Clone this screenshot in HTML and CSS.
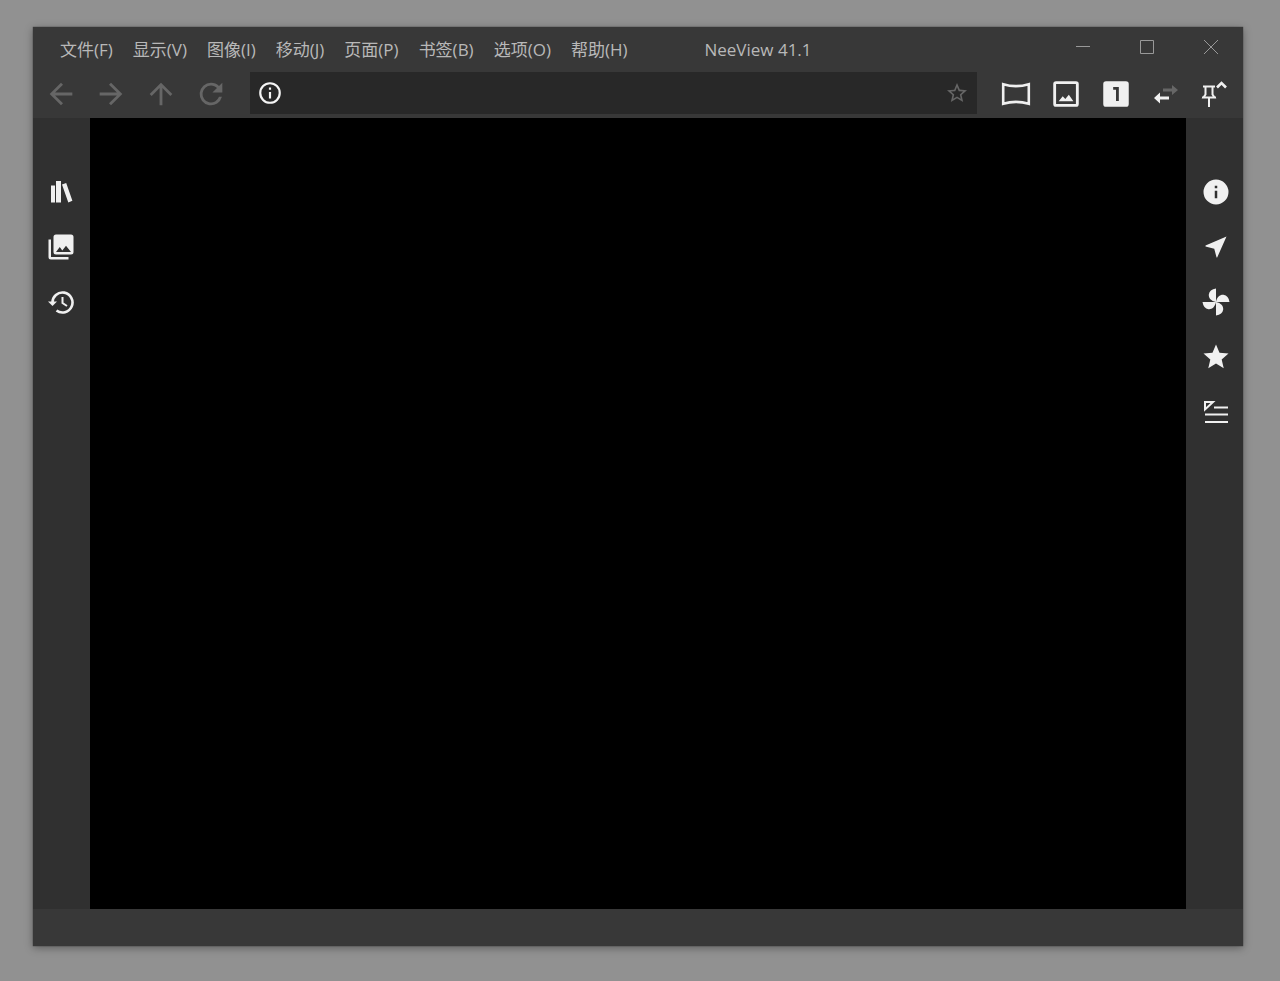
FILE: index.html
```html
<!DOCTYPE html>
<html lang="zh-CN">
<head>
<meta charset="utf-8">
<title>NeeView 41.1</title>
<link rel="stylesheet" href="styles.css">
</head>
<body>
<div class="window">
  <header class="titlebar">
    <nav class="menu" aria-label="菜单">
      <button>文件(F)</button>
      <button>显示(V)</button>
      <button>图像(I)</button>
      <button>移动(J)</button>
      <button>页面(P)</button>
      <button>书签(B)</button>
      <button>选项(O)</button>
      <button>帮助(H)</button>
    </nav>
    <h1 class="title">NeeView 41.1</h1>
    <div class="caption">
      <button aria-label="最小化"><svg width="16" height="16" viewBox="0 0 16 16"><path d="M1 7.500h14"/></svg></button>
      <button aria-label="最大化"><svg width="16" height="16" viewBox="0 0 16 16"><path d="M1.500 1.500h13v13h-13z"/></svg></button>
      <button aria-label="关闭"><svg width="16" height="16" viewBox="0 0 16 16"><path d="M1 1l14 14M15 1L1 15"/></svg></button>
    </div>
  </header>

  <div class="toolbar">
    <div class="tools dim">
      <button aria-label="后退"><svg width="34" height="34" viewBox="0 0 24 24"><path d="M20 11H7.830l5.590-5.590L12 4l-8 8 8 8 1.410-1.410L7.830 13H20z"/></svg></button>
      <button aria-label="前进"><svg width="34" height="34" viewBox="0 0 24 24"><path d="M12 4l-1.410 1.410L16.170 11H4v2h12.170l-5.580 5.590L12 20l8-8z"/></svg></button>
      <button aria-label="上级"><svg width="34" height="34" viewBox="0 0 24 24"><path d="M4 12l1.410 1.410L11 7.830V20h2V7.830l5.580 5.590L20 12l-8-8z"/></svg></button>
      <button aria-label="刷新"><svg width="34" height="34" viewBox="0 0 24 24"><path d="M17.650 6.350A7.960 7.960 0 0 0 12 4a8 8 0 1 0 7.730 10h-2.080A6 6 0 1 1 12 6c1.660 0 3.140.69 4.220 1.780L13 11h7V4z"/></svg></button>
    </div>
    <div class="address">
      <button aria-label="书籍信息"><svg width="26" height="26" viewBox="0 0 24 24"><path d="M11 7h2v2h-2zm0 4h2v6h-2zm1-9a10 10 0 1 0 0 20 10 10 0 0 0 0-20zm0 18a8 8 0 1 1 0-16 8 8 0 0 1 0 16z"/></svg></button>
      <input type="text" aria-label="地址">
      <button class="bookmark" aria-label="添加书签"><svg width="24" height="24" viewBox="0 0 24 24"><path d="M22 9.240l-7.190-.62L12 2 9.190 8.630 2 9.240l5.460 4.730L5.820 21 12 17.270 18.180 21l-1.630-7.030zM12 15.400l-3.760 2.270 1-4.280-3.320-2.880 4.380-.38L12 6.100l1.710 4.040 4.380.38-3.320 2.880 1 4.280z"/></svg></button>
    </div>
    <div class="tools">
      <button aria-label="全景"><svg width="30" height="26" viewBox="0 0 30 26"><path class="stroke" d="M2.200 3.200Q15 7 27.800 3.200V22.800Q15 19 2.200 22.800Z"/></svg></button>
      <button aria-label="适应窗口"><svg width="34" height="34" viewBox="0 0 24 24"><path d="M19 3H5a2 2 0 0 0-2 2v14a2 2 0 0 0 2 2h14a2 2 0 0 0 2-2V5a2 2 0 0 0-2-2zm0 16H5V5h14zM6.800 17.200h10.400l-3.200-4.700-2.500 3-1.800-1.900z"/></svg></button>
      <button aria-label="单页"><svg width="34" height="34" viewBox="0 0 24 24"><path d="M19 3H5a2 2 0 0 0-2 2v14a2 2 0 0 0 2 2h14a2 2 0 0 0 2-2V5a2 2 0 0 0-2-2zm-5 14h-2V9h-2V7h4z"/></svg></button>
      <button aria-label="翻页方向"><svg width="26" height="20" viewBox="0 0 26 20"><path class="muted" d="M10 4.500h9V1l6 5-6 5V7.500h-9z"/><path d="M16 12.500H7V8.500l-6 5.500L7 19.500v-4h9z"/></svg></button>
      <button class="pin" aria-label="固定菜单"><svg width="28" height="28" viewBox="0 0 28 28"><path class="stroke thin" d="M3 6.500h12M5.500 7v7.500L3.500 17.500h11L12.500 14.500V7M2 17.500h14M9 17.500V27"/><path class="stroke" d="M17 7.500l4.500-4.500L26 7.500"/></svg></button>
    </div>
  </div>

  <div class="content">
    <aside class="side left">
      <button aria-label="书架"><svg width="24" height="24" viewBox="0 0 24 24"><path d="M2 5.500h4v17H2zM7 1h5v21.500H7zM13 4.500l4.200-1.400 6.200 17.700-4.100 1.700z"/></svg></button>
      <button aria-label="页面列表"><svg width="30" height="30" viewBox="0 0 24 24"><path d="M22 16V4a2 2 0 0 0-2-2H8a2 2 0 0 0-2 2v12a2 2 0 0 0 2 2h12a2 2 0 0 0 2-2zm-11-4l2.030 2.710L16 11l4 5H8zM2 6v14a2 2 0 0 0 2 2h14v-2H4V6z"/></svg></button>
      <button aria-label="历史记录"><svg width="28" height="28" viewBox="0 0 28 28"><path class="stroke" d="M5.500 15A10 10 0 1 1 9.500 22.500"/><path d="M1 13.500h9L5.500 18z"/><path class="stroke thin" d="M15.500 9v6l4.500 3"/></svg></button>
    </aside>
    <main class="viewer" aria-label="图像"></main>
    <aside class="side right">
      <button aria-label="信息"><svg width="30" height="30" viewBox="0 0 24 24"><path d="M12 2a10 10 0 1 0 0 20 10 10 0 0 0 0-20zm1 15h-2v-6h2zm0-8h-2V7h2z"/></svg></button>
      <button aria-label="导航"><svg width="28" height="28" viewBox="0 0 24 24"><path d="M21 3L3 10.800v.7l7.500 2L12.500 21h.5z"/></svg></button>
      <button aria-label="效果"><svg width="28" height="28" viewBox="0 0 28 28"><path d="M14 14C9 13 6.500 10 6.800 6.500Q7.500 1.500 14 .5zM14 14C15 9 18 6.500 21.500 6.800Q26.500 7.500 27.500 14zM14 14C19 15 21.500 18 21.200 21.500Q20.500 26.500 14 27.500zM14 14C13 19 10 21.500 6.500 21.200Q1.500 20.500.5 14z"/></svg></button>
      <button aria-label="书签"><svg width="30" height="30" viewBox="0 0 24 24"><path d="M12 17.270L18.180 21l-1.640-7.030L22 9.240l-7.190-.61L12 2 9.190 8.630 2 9.240l5.460 4.730L5.820 21z"/></svg></button>
      <button aria-label="播放列表"><svg width="26" height="24" viewBox="0 0 26 24"><path class="stroke thin" d="M2 9.500V2h8zM11 7.500h14M2 14.500h23M2 22h23"/></svg></button>
    </aside>
  </div>
  <footer class="statusbar"></footer>
</div>
</body>
</html>
```
FILE: styles.css
```css
* {
  box-sizing: border-box;
}

body {
  margin: 0;
  min-height: 100vh;
  display: flex;
  padding: 27px 37px 35px 33px;
  background: #919191;
  color: #b8b8b8;
  font: 17px/24px "Open Sans", "Noto Sans CJK SC", sans-serif;
}

button {
  display: flex;
  align-items: center;
  justify-content: center;
  padding: 0;
  border: 0;
  background: none;
  color: inherit;
  font: inherit;
}

svg {
  display: block;
  flex: none;
  fill: currentColor;
}

.window {
  flex: 1;
  display: flex;
  flex-direction: column;
  background: #383838;
  box-shadow: 0 2px 8px rgba(0, 0, 0, 0.35), 0 0 1px #333;
}

.titlebar {
  display: flex;
  height: 45px;
}

.menu {
  display: flex;
  padding-left: 17px;
}

.menu button {
  padding: 0 10px;
  white-space: nowrap;
}

.title {
  flex: 1;
  margin: 0;
  padding-left: 67px;
  font-size: 17px;
  font-weight: 400;
  line-height: 45px;
  white-space: nowrap;
}

.caption {
  display: flex;
  height: 40px;
  color: #999;
}

.caption button {
  width: 64px;
}

.caption path {
  fill: none;
  stroke: currentColor;
}

.toolbar {
  display: flex;
  gap: 14px;
  padding: 0 6px 4px 3px;
}

.tools {
  display: flex;
  padding-top: 2px;
  color: #f0f0f0;
}

.tools button {
  width: 50px;
  height: 40px;
}

.tools .pin {
  width: 46px;
}

.dim {
  color: #666;
}

.muted {
  fill: #666;
}

.stroke {
  fill: none;
  stroke: currentColor;
  stroke-width: 2.6;
}

.thin {
  stroke-width: 2;
}

.address {
  flex: 1;
  display: flex;
  background: #282828;
  color: #f5f5f5;
}

.address button {
  width: 40px;
}

.address input {
  flex: 1;
  min-width: 0;
  padding: 0;
  border: 0;
  outline: 0;
  background: none;
  color: inherit;
  font: inherit;
}

.address .bookmark {
  color: #666;
}

.content {
  flex: 1;
  display: flex;
}

.side {
  width: 57px;
  padding-top: 46px;
  background: #303030;
  color: #f0f0f0;
}

.left {
  padding-right: 2px;
}

.right {
  padding-left: 3px;
}

.side button {
  width: 100%;
  height: 55px;
}

.viewer {
  flex: 1;
  background: #000;
}

.statusbar {
  height: 37px;
}
```
